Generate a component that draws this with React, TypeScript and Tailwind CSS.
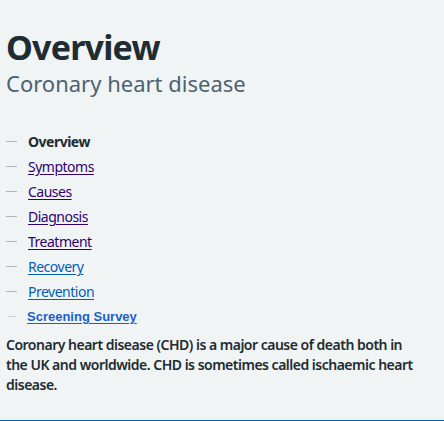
const links = [
  { label: "Symptoms", visited: true },
  { label: "Causes", visited: true },
  { label: "Diagnosis", visited: true },
  { label: "Treatment", visited: true },
  { label: "Recovery", visited: false },
  { label: "Prevention", visited: false },
];

export default function App() {
  return (
    <div className="min-h-[421px] bg-[#f0f4f5] border-b border-[#005eb8] px-[6px] pt-[25px] font-['Noto_Sans',sans-serif] text-[#212b32]">
      <h1 className="text-[34px] leading-[44px] font-bold tracking-[-0.8px]">Overview</h1>
      <p className="text-[22px] leading-[28px] text-[#4c6272]">Coronary heart disease</p>

      <ul className="mt-[32px]">
        <li className="flex h-[25px] items-center">
          <span className="w-[11px] h-px bg-[#aeb7bd]" />
          <span className="ml-[11px] text-[14px] font-bold tracking-[-0.5px]">Overview</span>
        </li>
        {links.map((l) => (
          <li key={l.label} className="flex h-[25px] items-center">
            <span className="w-[11px] h-px bg-[#aeb7bd]" />
            <a
              href="#"
              className={`ml-[11px] text-[14px] tracking-[-0.5px] underline underline-offset-2 ${
                l.visited ? "text-[#330072]" : "text-[#005eb8]"
              }`}
            >
              {l.label}
            </a>
          </li>
        ))}
        <li className="flex h-[25px] items-center">
          <span className="ml-[2px] w-[8px] h-px bg-[#c8d0d5]" />
          <a
            href="#"
            className="ml-[11px] text-[13px] font-bold text-[#1d5fc8] underline underline-offset-2 font-['Liberation_Sans',sans-serif]"
          >
            Screening Survey
          </a>
        </li>
      </ul>

      <p className="mt-[6px] pr-[14px] text-[14px] leading-[20px] font-semibold tracking-[-0.5px]">
        Coronary heart disease (CHD) is a major cause of death both in the UK and worldwide. CHD is sometimes called ischaemic heart disease.
      </p>
    </div>
  );
}
